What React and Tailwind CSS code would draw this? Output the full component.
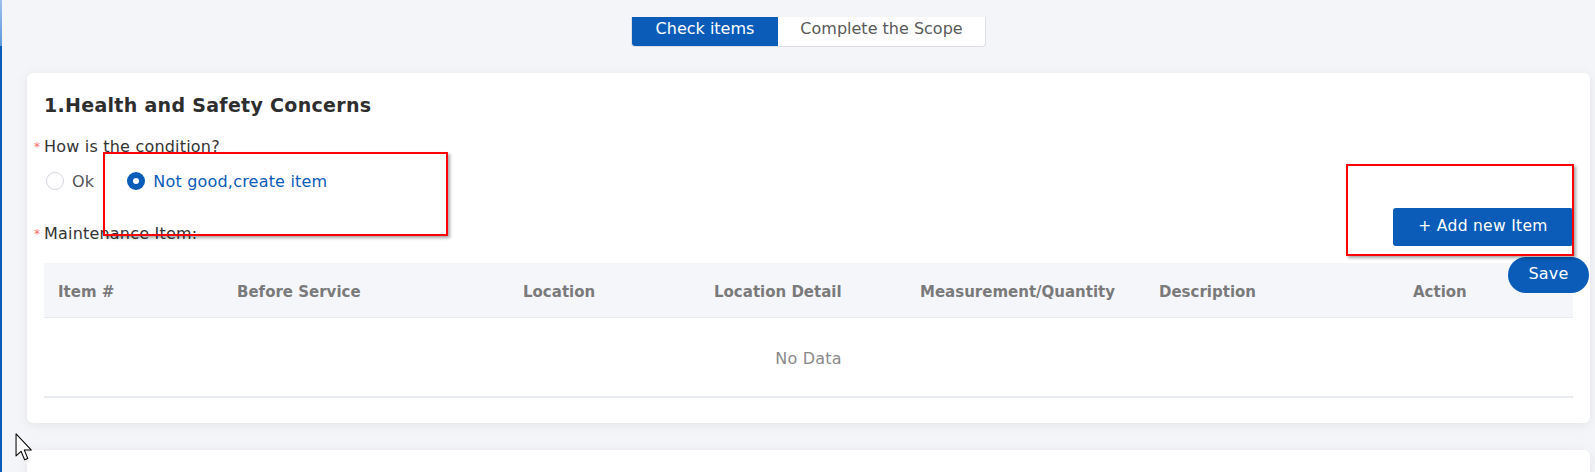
import React from "react";

const columns = [
  "Item #",
  "Before Service",
  "Location",
  "Location Detail",
  "Measurement/Quantity",
  "Description",
  "Action",
];

function Radio({ checked, label }) {
  return (
    <div className="flex items-center gap-[8px]">
      {checked ? (
        <span className="flex h-[18px] w-[18px] items-center justify-center rounded-full bg-[#0b5cb8]">
          <span className="h-[6px] w-[6px] rounded-full bg-white" />
        </span>
      ) : (
        <span className="h-[18px] w-[18px] rounded-full border border-[#d6d8e0] bg-white" />
      )}
      <span className={checked ? "pt-[1px] text-[#0b5cb8]" : "pt-[1px] text-[#555]"}>{label}</span>
    </div>
  );
}

function Required({ children }) {
  return (
    <div className="-ml-[10px] flex h-[22px] items-center leading-[22px] text-[#333]">
      <span className="mr-[4px] w-[6px] text-[12px] leading-none text-[#f56c6c]">*</span>
      {children}
    </div>
  );
}

export default function App() {
  return (
    <div
      className="relative flex h-[472px] w-full overflow-hidden bg-[#f4f5f9] text-[16px] tracking-[0.2px]"
      style={{ fontFamily: '"DejaVu Sans", "Liberation Sans", sans-serif' }}
    >
      {/* left rail */}
      <div className="flex w-[2px] flex-col">
        <div className="h-[46px] bg-gradient-to-b from-[#9cc0ec] to-[#5d98dc]" />
        <div className="flex-1 bg-[#0a5cb8]" />
      </div>

      <div className="flex-1 pl-[25px] pr-[5px]">
        {/* tabs */}
        <div className="flex justify-center pt-[17px]">
          <div className="flex h-[30px] overflow-hidden rounded-b-[4px] border border-t-0 border-[#dcdfe6] bg-white text-[16px] tracking-normal">
            <div className="flex w-[146px] items-center justify-center bg-[#0a5cb8] pb-[5px] text-white">
              Check items
            </div>
            <div className="flex w-[207px] items-center justify-center pb-[5px] text-[#5a5a5a]">
              Complete the Scope
            </div>
          </div>
        </div>

        {/* card */}
        <div className="mt-[26px] rounded-[6px] bg-white px-[17px] pb-[25px] pt-[18px] shadow-[0_2px_12px_rgba(0,0,0,0.07)]">
          <h2 className="h-[28px] text-[19px] font-bold leading-[28px] tracking-[0.3px] text-[#2e2e2e]">
            1.Health and Safety Concerns
          </h2>

          <div className="mt-[17px]">
            <Required>How is the condition?</Required>
          </div>

          <div className="mt-[12px] flex h-[22px] items-center gap-[33px] pl-[2px]">
            <Radio label="Ok" />
            <Radio checked label="Not good,create item" />
          </div>

          <div className="mt-[16px] flex items-end justify-between">
            <div className="mb-[1px]">
              <Required>Maintenance Item:</Required>
            </div>
            <button className="h-[38px] w-[180px] rounded-[3px] bg-[#0a5cb8] text-[15.5px] tracking-[0.3px] text-white">
              + Add new Item
            </button>
          </div>

          {/* table */}
          <div className="mt-[17px]">
            <div className="grid h-[55px] grid-cols-[179px_286px_191px_206px_239px_254px_1fr] items-center border-b border-[#e8ebf2] bg-[#f5f6fa] pt-[4px] text-[15px] font-bold tracking-normal text-[#7a7a7a]">
              {columns.map((c) => (
                <div key={c} className="pl-[14px]">
                  {c}
                </div>
              ))}
            </div>
            <div className="flex h-[80px] items-center justify-center border-b-2 border-[#e8ebf2] pt-[4px] text-[#8a8a8a]">
              No Data
            </div>
          </div>
        </div>

        {/* next card */}
        <div className="mt-[27px] h-[60px] rounded-[6px] bg-white shadow-[0_2px_12px_rgba(0,0,0,0.07)]" />
      </div>

      {/* floating save */}
      <button className="absolute left-[1508px] top-[257px] h-[36px] w-[81px] rounded-full bg-[#0a5cb8] pb-[2px] text-[16px] text-white">
        Save
      </button>

      {/* annotation boxes */}
      <div className="pointer-events-none absolute left-[103px] top-[152px] h-[84px] w-[345px] border-2 border-[#ff0000] shadow-[2px_2px_3px_rgba(0,0,0,0.35)]" />
      <div className="pointer-events-none absolute left-[1346px] top-[164px] h-[92px] w-[228px] border-2 border-[#ff0000] shadow-[2px_2px_3px_rgba(0,0,0,0.35)]" />

      {/* mouse pointer */}
      <svg
        className="absolute left-[15px] top-[433px]"
        width="18"
        height="28"
        viewBox="0 0 12 19"
      >
        <path
          d="M0.6 0.6 L0.6 15.6 L4 12.4 L6.4 18.2 L8.6 17.3 L6.2 11.6 L11 11.6 Z"
          fill="white"
          stroke="black"
          strokeWidth="0.7"
          strokeLinejoin="round"
        />
      </svg>
    </div>
  );
}
